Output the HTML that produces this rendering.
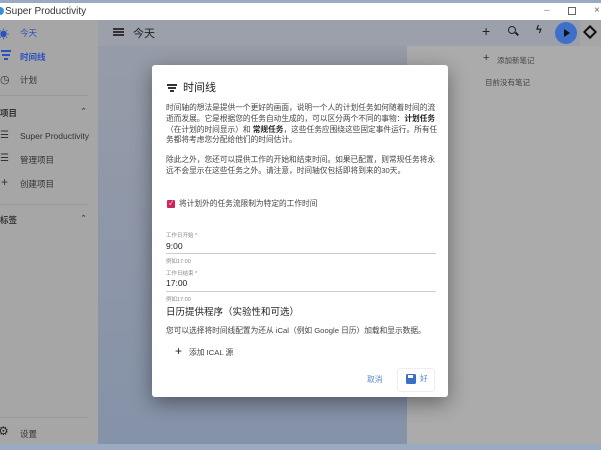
<!DOCTYPE html>
<html><head><meta charset="utf-8"><style>
*{margin:0;padding:0;box-sizing:border-box}
body{width:601px;height:450px;overflow:hidden;position:relative;font-family:"Liberation Sans","Noto Sans CJK SC",sans-serif;background:#9aaac0}
.a{position:absolute}
.tb{left:0;top:3px;width:601px;height:17px;background:#fff;font-size:10px;color:#333}
.side{left:0;top:20px;width:98px;height:424px;background:#a6a6a6}
.main{left:98px;top:20px;width:309px;height:424px;background:linear-gradient(#979ca8,#8592a8)}
.hdr{left:98px;top:20px;width:503px;height:26px;background:#9ba0ab}
.rp{left:407px;top:46px;width:194px;height:398px;background:#ababab}
.si{font-size:8.5px;color:#333}
.dlg{left:152px;top:65px;width:296px;height:332px;background:#fff;border-radius:3px;box-shadow:0 6px 20px rgba(0,0,0,.4)}
.p{font-size:7.7px;line-height:10.8px;color:#444}
.lbl{font-size:5.5px;color:#888}
.val{font-size:8.5px;color:#222}
.line{height:1px;background:#ccc;width:270px;left:14px}
</style></head><body>
<div class="a" style="left:0;top:0;width:601px;height:3px;background:#9aaac0"></div>
<div class="a tb"><span class="a" style="left:-4px;top:4px;width:8px;height:8px;border-radius:50%;background:#3a8fd6"></span><span class="a" style="left:5px;top:3px">Super Productivity</span>
<span class="a" style="left:544px;top:2px;color:#888">–</span><span class="a" style="left:568px;top:4px;width:8px;height:8px;border:1px solid #666"></span><span class="a" style="left:594px;top:2px;color:#666">×</span></div>
<div class="a side">
<div class="a" style="left:-2px;top:6px;font-size:11px;color:#2a52be">☀</div><div class="a si" style="left:20px;top:7px;color:#2a52be">今天</div>
<div class="a" style="left:1px;top:30px;width:10px;height:1.5px;background:#2a52be"></div>
<div class="a" style="left:2px;top:34px;width:8px;height:1.5px;background:#2a52be"></div>
<div class="a" style="left:4px;top:38px;width:4px;height:1.5px;background:#2a52be"></div>
<div class="a si" style="left:20px;top:31px;color:#2a52be;font-weight:bold">时间线</div>
<div class="a" style="left:0;top:53px;font-size:11px;color:#333">◷</div><div class="a si" style="left:20px;top:54px">计划</div>
<div class="a" style="left:0;top:75px;width:88px;height:1px;background:#999"></div>
<div class="a si" style="left:0;top:87px;font-weight:bold">项目</div><div class="a si" style="left:80px;top:86px">⌃</div>
<div class="a si" style="left:0;top:110px;font-size:10px">☰</div><div class="a si" style="left:20px;top:111px">Super Productivity</div>
<div class="a si" style="left:0;top:133px;font-size:10px">☰</div><div class="a si" style="left:20px;top:134px">管理项目</div>
<div class="a" style="left:1px;top:155px;font-size:12px;color:#333">+</div><div class="a si" style="left:20px;top:158px">创建项目</div>
<div class="a" style="left:0;top:184px;width:88px;height:1px;background:#999"></div>
<div class="a si" style="left:0;top:194px;font-weight:bold">标签</div><div class="a si" style="left:80px;top:193px">⌃</div>
<div class="a" style="left:0;top:397px;width:88px;height:1px;background:#999"></div>
<div class="a" style="left:-2px;top:404px;font-size:12px;color:#222">⚙</div><div class="a si" style="left:20px;top:408px">设置</div>
</div>
<div class="a main"></div>
<div class="a hdr">
<div class="a" style="left:15px;top:8px;width:11px;height:2px;background:#333;box-shadow:0 3px 0 #333,0 6px 0 #333"></div>
<div class="a" style="left:35px;top:5px;font-size:11px;color:#222">今天</div>
<div class="a" style="left:384px;top:3px;font-size:14px;color:#222">+</div>
<div class="a" style="left:410px;top:6px;width:8px;height:8px;border:1.5px solid #222;border-radius:50%"></div>
<div class="a" style="left:417px;top:13px;width:4px;height:1.5px;background:#222;transform:rotate(45deg)"></div>
<div class="a" style="left:438px;top:4px;font-size:11px;color:#222;font-weight:bold">ϟ</div>
<div class="a" style="left:457px;top:2px;width:22px;height:22px;border-radius:50%;background:#3e6fc9"></div>
<div class="a" style="left:466px;top:9px;width:0;height:0;border-left:6px solid #111;border-top:4px solid transparent;border-bottom:4px solid transparent"></div>
<div class="a" style="left:482px;top:0;width:21px;height:26px;background:#a6a6a6"></div>
<div class="a" style="left:487px;top:7px;width:10px;height:10px;border:2px solid #111;transform:rotate(45deg)"></div>
</div>
<div class="a rp">
<div class="a" style="left:76px;top:6px;font-size:11px;color:#333">+</div><div class="a" style="left:90px;top:9px;font-size:7.5px;color:#444">添加新笔记</div>
<div class="a" style="left:78px;top:31px;font-size:7.5px;color:#444">目前没有笔记</div>
</div>
<div class="a dlg">
<div class="a" style="left:15px;top:19px;width:10px;height:1.5px;background:#333"></div>
<div class="a" style="left:16px;top:22px;width:8px;height:1.5px;background:#333"></div>
<div class="a" style="left:18px;top:25px;width:4px;height:1.5px;background:#333"></div>
<div class="a" style="left:31px;top:14px;font-size:11px;color:#222">时间线</div>
<div class="a p" style="left:14px;top:38px;width:276px">时间轴的想法是提供一个更好的画面，说明一个人的计划任务如何随着时间的流逝而发展。它是根据您的任务自动生成的，可以区分两个不同的事物：<b style="color:#222">计划任务</b>（在计划的时间显示）和 <b style="color:#222">常规任务</b>，这些任务应围绕这些固定事件运行。所有任务都将考虑您分配给他们的时间估计。</div>
<div class="a p" style="left:14px;top:90px;width:276px">除此之外，您还可以提供工作的开始和结束时间。如果已配置，则常规任务将永远不会显示在这些任务之外。请注意，时间轴仅包括即将到来的30天。</div>
<div class="a" style="left:15px;top:135px;width:8px;height:8px;border-radius:1px;background:#d0245b;color:#fff;font-size:6px;line-height:8px;text-align:center">✓</div>
<div class="a p" style="left:27px;top:134px">将计划外的任务流限制为特定的工作时间</div>
<div class="a lbl" style="left:14px;top:166px">工作日开始 *</div>
<div class="a val" style="left:14px;top:176px">9:00</div>
<div class="a line" style="top:188px"></div>
<div class="a lbl" style="left:14px;top:192px">例如17:00</div>
<div class="a lbl" style="left:14px;top:204px">工作日结束 *</div>
<div class="a val" style="left:14px;top:213px">17:00</div>
<div class="a line" style="top:226px"></div>
<div class="a lbl" style="left:14px;top:230px">例如17:00</div>
<div class="a" style="left:14px;top:239px;font-size:9.5px;color:#222">日历提供程序（实验性和可选）</div>
<div class="a p" style="left:14px;top:261px">您可以选择将时间线配置为还从 iCal（例如 Google 日历）加载和显示数据。</div>
<div class="a" style="left:23px;top:279px;font-size:12px;color:#222">+</div>
<div class="a p" style="left:37px;top:283px">添加 ICAL 源</div>
<div class="a p" style="left:215px;top:310px;color:#5a86d0">取消</div>
<div class="a" style="left:245px;top:303px;width:38px;height:24px;border:1px solid #eee;border-radius:3px"></div>
<div class="a" style="left:254px;top:309px;width:10px;height:10px;border-radius:1.5px;background:#3a6fc9"></div>
<div class="a" style="left:256px;top:310px;width:5px;height:3px;background:#fff"></div>
<div class="a p" style="left:268px;top:309px;color:#5a86d0">好</div>
</div>
</body></html>
